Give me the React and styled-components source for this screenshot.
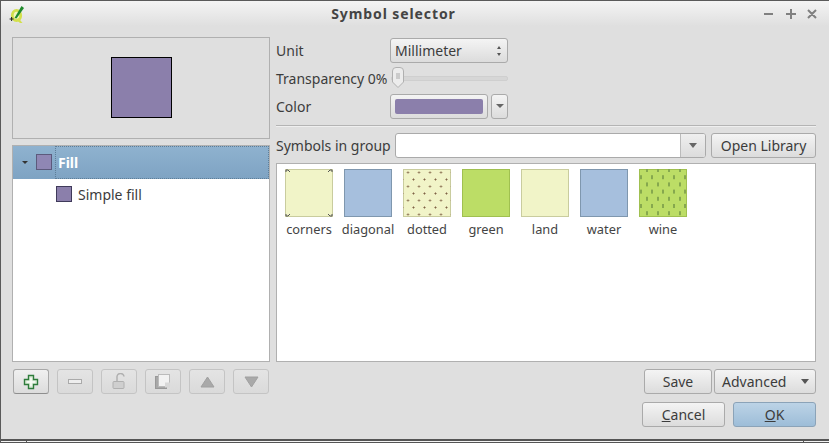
import React from "react";
import styled, { createGlobalStyle } from "styled-components";

const Global = createGlobalStyle`
  html, body { margin: 0; padding: 0; background: #dfdfdf; }
  * { box-sizing: border-box; }
  #root { width: 829px; height: 443px; overflow: hidden; }
`;

const Win = styled.div`
  width: 829px; height: 443px; display: flex; flex-direction: column;
  background: #dfdfdf; border-top: 1px solid #5a5a5a; border-left: 1px solid #5a5a5a;
  font-family: "Noto Sans", "Open Sans", sans-serif; font-size: 14px; color: #3c3c3c;
`;
const TitleBar = styled.div`
  height: 25px; display: flex; align-items: center; padding: 0 0 0 8px; flex: none;
  background: linear-gradient(#f4f4f4, #dfdfdf);
`;
const TitleText = styled.div`
  flex: 1; text-align: center; font-weight: 700; font-size: 14px; color: #444; padding-left: 0;
  letter-spacing: .9px;
`;
const WinButtons = styled.div`display: flex; align-items: center;`;
const Main = styled.div`
  flex: none; display: grid; grid-template-columns: 258px 540px; column-gap: 6px;
  padding: 11px 0 0 11px;
`;
const Left = styled.div`display: flex; flex-direction: column; height: 357px;`;
const Preview = styled.div`
  height: 102px; border: 1px solid #b0b0b0; display: flex; align-items: center; justify-content: center;
`;
const PreviewSwatch = styled.div`width: 61px; height: 61px; background: #8b7fab; border: 1px solid #000;`;
const Tree = styled.div`
  margin-top: 6px; height: 218px; border: 1px solid #b0b0b0; background: #fff;
`;
const RootRow = styled.div`
  height: 33px; display: flex; align-items: center;
  background: linear-gradient(#8fb2cf, #7ea3c3);
`;
const ChildRow = styled.div`height: 31px; display: flex; align-items: center; padding-left: 43px; gap: 6px; font-size: 14px;`;
const Twisty = styled.div`
  width: 0; height: 0; margin: 0 0 0 9px;
  border-left: 3px solid transparent; border-right: 3px solid transparent; border-top: 3px solid #333;
`;
const TreeSwatch = styled.div`
  width: 16px; height: 16px; background: ${p => p.$c}; border: 1px solid ${p => p.$b};
  margin-left: ${p => p.$ml || 0}px;
`;
const RootLabel = styled.div`
  flex: 1; align-self: stretch; margin-left: 3px; display: flex; align-items: center; padding-left: 2px;
  border: 1px dotted #5e7e98; color: #fff; font-weight: 700; font-size: 14px;
`;
const ToolRow = styled.div`display: flex; gap: 8px; margin-top: 7px; padding-left: 1px;`;
const ToolBtn = styled.div`
  width: 36px; height: 25px; border-radius: 3px; display: flex; align-items: center; justify-content: center;
  border: 1px solid ${p => p.$on ? "#a8a8a8" : "#c4c4c4"};
  background: ${p => p.$on ? "linear-gradient(#f0f0f0,#dcdcdc)" : "linear-gradient(#e4e4e4,#dadada)"};
  ${p => p.$on && "border-bottom-color:#8e8e8e;"}
`;
const Right = styled.div`display: flex; flex-direction: column; height: 357px;`;
const FormRow = styled.div`display: flex; align-items: center; height: ${p => p.$h}px;`;
const Label = styled.div`width: 114px; flex: none; font-size: 14px; white-space: nowrap;`;
const Btn = styled.div`
  height: ${p => p.$h || 25}px; width: ${p => p.$w}px; flex: none; border: 1px solid #aaa; border-radius: 3px;
  background: ${p => p.$primary ? "linear-gradient(#bcd3e6,#9dbdd8)" : "linear-gradient(#f4f4f4,#dcdcdc)"};
  ${p => p.$primary && "border-color:#8ba3b8;"}
  display: flex; align-items: center; justify-content: ${p => p.$pl ? "space-between" : "center"};
  padding: ${p => p.$pl ? `0 6px 0 ${p.$pl}px` : "0"}; font-size: 14px; color: #3c3c3c;
`;
const Spin = styled.div`display: flex; flex-direction: column; gap: 4px;`;
const ArrowUp = styled.div`width:0;height:0;border-left:2.500px solid transparent;border-right:2.500px solid transparent;border-bottom:3px solid #555;`;
const ArrowDown = styled.div`width:0;height:0;border-left:${p=>p.$s||2.5}px solid transparent;border-right:${p=>p.$s||2.5}px solid transparent;border-top:${p=>p.$t||3}px solid ${p=>p.$c||"#555"};`;
const SliderWrap = styled.div`position: relative; width: 117px; height: 5px; margin-left: 1px; background: #d6d6d6; border-radius: 2px; border: 1px solid #cfcfcf;`;
const ThumbSvg = styled.svg`position: absolute; left: 0; top: -10px;`;
const ColorBtn = styled(Btn)`padding: 4px;`;
const ColorFill = styled.div`width: 100%; height: 100%; background: #8b7fab; border-radius: 2px;`;
const DropBtn = styled(Btn)`margin-left: 3px;`;
const Sep = styled.div`height: 1px; background: #b4b4b4; margin-top: 5px; box-shadow: 0 1px 0 #efefef;`;
const GroupRow = styled.div`display: flex; align-items: center; height: 25px; margin-top: 7px;`;
const GroupLabel = styled.div`width: 119px; flex: none;`;
const Combo = styled.div`
  width: 311px; height: 25px; display: flex; border: 1px solid #aaa; border-radius: 3px; background: #fff; overflow: hidden;
`;
const ComboInput = styled.div`flex: 1;`;
const ComboBtn = styled.div`
  width: 25px; border-left: 1px solid #bbb; background: linear-gradient(#efefef,#dcdcdc);
  display: flex; align-items: center; justify-content: center;
`;
const OpenBtn = styled(Btn)`margin-left: 5px;`;
const Gallery = styled.div`
  margin-top: 5px; height: 199px; border: 1px solid #b0b0b0; background: #fff;
  display: flex; gap: 11px; padding: 5px 0 0 8px; width: 540px;
`;
const Item = styled.div`width: 48px; display: flex; flex-direction: column; align-items: center;`;
const SymbolSvg = styled.svg`display: block; width: 48px; height: 48px; flex: none;`;
const ItemLabel = styled.div`margin-top: 3px; font-size: 12.8px; line-height: 18px; white-space: nowrap; color: #444;`;
const SaveRow = styled.div`display: flex; justify-content: flex-end; gap: 2px; margin-top: 7px; width: 540px;`;
const ActionRow = styled.div`
  display: flex; justify-content: flex-end; gap: 8px; width: 815px; margin-top: 8px;
`;
const Under = styled.span`text-decoration: underline;`;
const Bottom = styled.div`
  position: relative; height: 4px; border-top: 2px solid #555; border-bottom: 1px solid #555; background: #f4f4f4; margin-top: auto; flex: none;
  &::before, &::after { content: ""; position: absolute; top: 0; width: 1px; height: 1px; background: #555; }
  &::before { left: 25px; }
  &::after { left: 802px; }
`;

const purple = "#8b7fab";

function Logo() {
  return (
    <svg width="16" height="20" viewBox="0 0 16 20">
      <ellipse cx="7.500" cy="11.500" rx="4.200" ry="5.200" fill="#f2f5c0" stroke="#d3e04c" strokeWidth="2.800" />
      <path d="M7 15.500l4 3.500h2.500l-4-5z" fill="#d3e04c" />
      <path d="M5.500 14L12.500 2 15 4 7.500 14.500z" fill="#1f8a2c" />
      <path d="M2.600 13v4M.6 15h4" stroke="#222" strokeWidth="1" />
    </svg>
  );
}

const Corners = () => (
  <SymbolSvg viewBox="0 0 48 48">
    <rect x=".5" y=".5" width="47" height="47" fill="#f1f4c8" stroke="#c9cc9e" />
    <path d="M1 3V1h2l2 2M47 3V1h-2l-2 2M1 45v2h2l2-2M47 45v2h-2l-2-2" fill="none" stroke="#555" strokeWidth="1" />
  </SymbolSvg>
);
const Flat = ({ fill, stroke }) => (
  <SymbolSvg viewBox="0 0 48 48">
    <rect x=".5" y=".5" width="47" height="47" fill={fill} stroke={stroke} />
  </SymbolSvg>
);
const Dotted = () => {
  const dots = [];
  for (let r = 0; r < 7; r++) for (let c = 0; c < 5; c++) {
    const x = (r % 2 ? -0.5 : 5) + c * 11;
    const y = 3.5 + r * 7;
    dots.push(<path key={`${r}-${c}`} d={`M${x - 1.5} ${y}h3M${x} ${y - 1.5}v3`} stroke="#b8a684" strokeWidth="1" />);
    dots.push(<rect key={`c${r}-${c}`} x={x - .5} y={y - .5} width="1" height="1" fill="#7a6646" />);
  }
  return (
    <SymbolSvg viewBox="0 0 48 48">
      <rect x=".5" y=".5" width="47" height="47" fill="#f1f4c8" stroke="#c9cc9e" />
      {dots}
    </SymbolSvg>
  );
};
const Wine = () => {
  const marks = [];
  for (let r = 0; r < 7; r++) for (let c = 0; c < 5; c++) {
    marks.push(<rect key={`${r}-${c}`} x={(r % 2 ? 12 : 7) + (c - 1) * 11} y={r * 7.2 - 1} width="2" height="4" fill="#86a84e" />);
  }
  return (
    <SymbolSvg viewBox="0 0 48 48">
      <rect x=".5" y=".5" width="47" height="47" fill="#bcdd66" stroke="#a0c050" />
      {marks}
    </SymbolSvg>
  );
};

const symbols = [
  ["corners", <Corners />],
  ["diagonal", <Flat fill="#a6bfdd" stroke="#7f97ae" />],
  ["dotted", <Dotted />],
  ["green", <Flat fill="#bcdd66" stroke="#a0c050" />],
  ["land", <Flat fill="#f1f4c8" stroke="#c9cc9e" />],
  ["water", <Flat fill="#a6bfdd" stroke="#7f97ae" />],
  ["wine", <Wine />],
];

export default function App() {
  return (
    <Win>
      <Global />
      <TitleBar>
        <Logo />
        <TitleText>Symbol selector</TitleText>
        <WinButtons>
          <svg width="67" height="14" viewBox="0 0 67 14" fill="none" stroke="#808080" strokeWidth="2">
            <path d="M2 7h9M24 7h10M29 2v10M46 3l8 8M54 3l-8 8" />
          </svg>
        </WinButtons>
      </TitleBar>
      <Main>
        <Left>
          <Preview><PreviewSwatch /></Preview>
          <Tree>
            <RootRow>
              <Twisty />
              <TreeSwatch $c="#8f87b4" $b="#5c5a7c" $ml={8} />
              <RootLabel>Fill</RootLabel>
            </RootRow>
            <ChildRow>
              <TreeSwatch $c={purple} $b="#3f3a5a" />
              <span>Simple fill</span>
            </ChildRow>
          </Tree>
          <ToolRow>
            <ToolBtn $on>
              <svg width="16" height="16" viewBox="0 0 16 16">
                <path d="M5.500 1.500h5v4h4v5h-4v4h-5v-4h-4v-5h4z" fill="#dcecd8" stroke="#2f7d3c" strokeWidth="1.400" />
                <path d="M8 4v8M4 8h8" stroke="#f8fcf6" strokeWidth="1.600" />
              </svg>
            </ToolBtn>
            <ToolBtn>
              <svg width="16" height="8" viewBox="0 0 16 8"><rect x="1.500" y="1.500" width="13" height="4" fill="#eee" stroke="#aaa" /></svg>
            </ToolBtn>
            <ToolBtn>
              <svg width="14" height="17" viewBox="0 0 14 17" fill="none"><path d="M4 8V4.500a3.500 3.500 0 0 1 7-1" stroke="#b0b0b0" strokeWidth="1.500" transform="translate(1 0)" /><rect x="1" y="8.500" width="11" height="7" rx="1" fill="#cfcfcf" stroke="#b0b0b0" /></svg>
            </ToolBtn>
            <ToolBtn>
              <svg width="16" height="15" viewBox="0 0 16 15"><rect x=".5" y="2.500" width="11" height="12" fill="#a8a8a8" stroke="#999" /><rect x="3.500" y=".5" width="11" height="12" fill="#f2f2f2" stroke="#bbb" /><rect x="10" y="8.500" width="5" height="5" fill="#d8d8d8" /></svg>
            </ToolBtn>
            <ToolBtn>
              <svg width="15" height="12" viewBox="0 0 15 12"><path d="M7.500 1L14 11H1z" fill="#a9a9a9" stroke="#a0a0a0" /></svg>
            </ToolBtn>
            <ToolBtn>
              <svg width="15" height="12" viewBox="0 0 15 12"><path d="M1 1h13L7.500 11z" fill="#a9a9a9" stroke="#a0a0a0" /></svg>
            </ToolBtn>
          </ToolRow>
        </Left>
        <Right>
          <FormRow $h={27}>
            <Label>Unit</Label>
            <Btn $w={118} $pl={4}>Millimeter<Spin><ArrowUp /><ArrowDown /></Spin></Btn>
          </FormRow>
          <FormRow $h={28}>
            <Label>Transparency 0%</Label>
            <SliderWrap>
              <ThumbSvg width="12" height="21" viewBox="0 0 12 21">
                <path d="M.5 4a3.500 3.500 0 0 1 3.500-3.500h4a3.500 3.500 0 0 1 3.500 3.500v11L6 20.500.5 15z" fill="#ececec" stroke="#b0b0b0" />
                <path d="M4 7h4M4 9h4M4 11h4" stroke="#aaa" />
              </ThumbSvg>
            </SliderWrap>
          </FormRow>
          <FormRow $h={28}>
            <Label>Color</Label>
            <ColorBtn $w={98}><ColorFill /></ColorBtn>
            <DropBtn $w={17}><ArrowDown $s={4} $t={4} $c="#666" /></DropBtn>
          </FormRow>
          <Sep />
          <GroupRow>
            <GroupLabel>Symbols in group</GroupLabel>
            <Combo>
              <ComboInput />
              <ComboBtn><ArrowDown $s={4} $t={5} $c="#666" /></ComboBtn>
            </Combo>
            <OpenBtn $w={105}>Open Library</OpenBtn>
          </GroupRow>
          <Gallery>
            {symbols.map(([name, icon]) => (
              <Item key={name}>
                {icon}
                <ItemLabel>{name}</ItemLabel>
              </Item>
            ))}
          </Gallery>
          <SaveRow>
            <Btn $w={68}>Save</Btn>
            <Btn $w={102} $pl={7}>Advanced<ArrowDown $s={4} $t={5} $c="#555" /></Btn>
          </SaveRow>
        </Right>
      </Main>
      <ActionRow>
        <Btn $w={83}><span><Under>C</Under>ancel</span></Btn>
        <Btn $w={83} $primary><span><Under>O</Under>K</span></Btn>
      </ActionRow>
      <Bottom />
    </Win>
  );
}
